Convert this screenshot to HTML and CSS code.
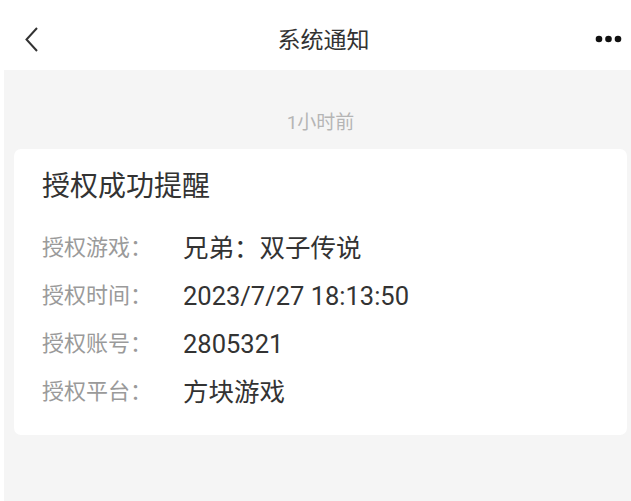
FILE: index.html
```html
<!DOCTYPE html>
<html lang="zh-CN">
<head>
<meta charset="utf-8">
<title>系统通知</title>
<link rel="stylesheet" href="styles.css">
</head>
<body>
<div class="page">
  <header class="topbar">
    <div class="back">
      <svg width="14" height="28" viewBox="0 0 14 28"><polyline points="12,2 1.5,13.5 12,25" fill="none" stroke="#333" stroke-width="2" stroke-linejoin="miter"/></svg>
    </div>
    <div class="title">系统通知</div>
    <div class="more">
      <svg width="27" height="8" viewBox="0 0 27 8"><circle cx="4" cy="4" r="3.3" fill="#111"/><circle cx="13.5" cy="4" r="3.3" fill="#111"/><circle cx="23" cy="4" r="3.3" fill="#111"/></svg>
    </div>
  </header>
  <main class="content">
    <div class="time">1小时前</div>
    <section class="card">
      <h2 class="card-title">授权成功提醒</h2>
      <div class="rows">
        <div class="row"><span class="label">授权游戏：</span><span class="value">兄弟：双子传说</span></div>
        <div class="row"><span class="label">授权时间：</span><span class="value">2023/7/27 18:13:50</span></div>
        <div class="row"><span class="label">授权账号：</span><span class="value">2805321</span></div>
        <div class="row"><span class="label">授权平台：</span><span class="value">方块游戏</span></div>
      </div>
    </section>
  </main>
</div>
</body>
</html>
```
FILE: styles.css
```css
html, body {
  margin: 0;
  padding: 0;
  background: #ffffff;
  overflow: hidden;
}
body {
  width: 631px;
  height: 501px;
  font-family: Roboto, "Noto Sans CJK SC", sans-serif;
  color: #333333;
}
.page {
  margin-left: 4px;
  width: 633px;
  height: 501px;
  display: flex;
  flex-direction: column;
}
.topbar {
  height: 64px;
  padding: 6px 15px 0 21px;
  display: grid;
  grid-template-columns: 1fr auto 1fr;
  align-items: center;
  background: #ffffff;
}
.back {
  display: flex;
  align-items: center;
  padding-top: 3px;
}
.title {
  font-family: "Noto Sans CJK SC", sans-serif;
  font-size: 23px;
  line-height: 30px;
  color: #333333;
}
.more {
  display: flex;
  justify-content: flex-end;
  padding-top: 2px;
}
.content {
  flex: 1;
  background: #f5f5f5;
  padding: 41px 10px 0 10px;
}
.time {
  text-align: center;
  font-size: 19px;
  line-height: 24px;
  color: #b5b5b5;
  margin-bottom: 14px;
}
.card {
  background: #ffffff;
  border-radius: 7px;
  padding: 17px 28px 19px 28px;
}
.card-title {
  margin: 0 0 22px 0;
  font-family: "Noto Sans CJK SC", sans-serif;
  font-weight: normal;
  font-size: 28px;
  line-height: 36px;
  color: #333333;
}
.row {
  display: grid;
  grid-template-columns: 141px 1fr;
  line-height: 48px;
  height: 48px;
}
.label {
  font-size: 22px;
  color: #9a9a9a;
}
.value {
  font-size: 25.5px;
  color: #333333;
}
```
